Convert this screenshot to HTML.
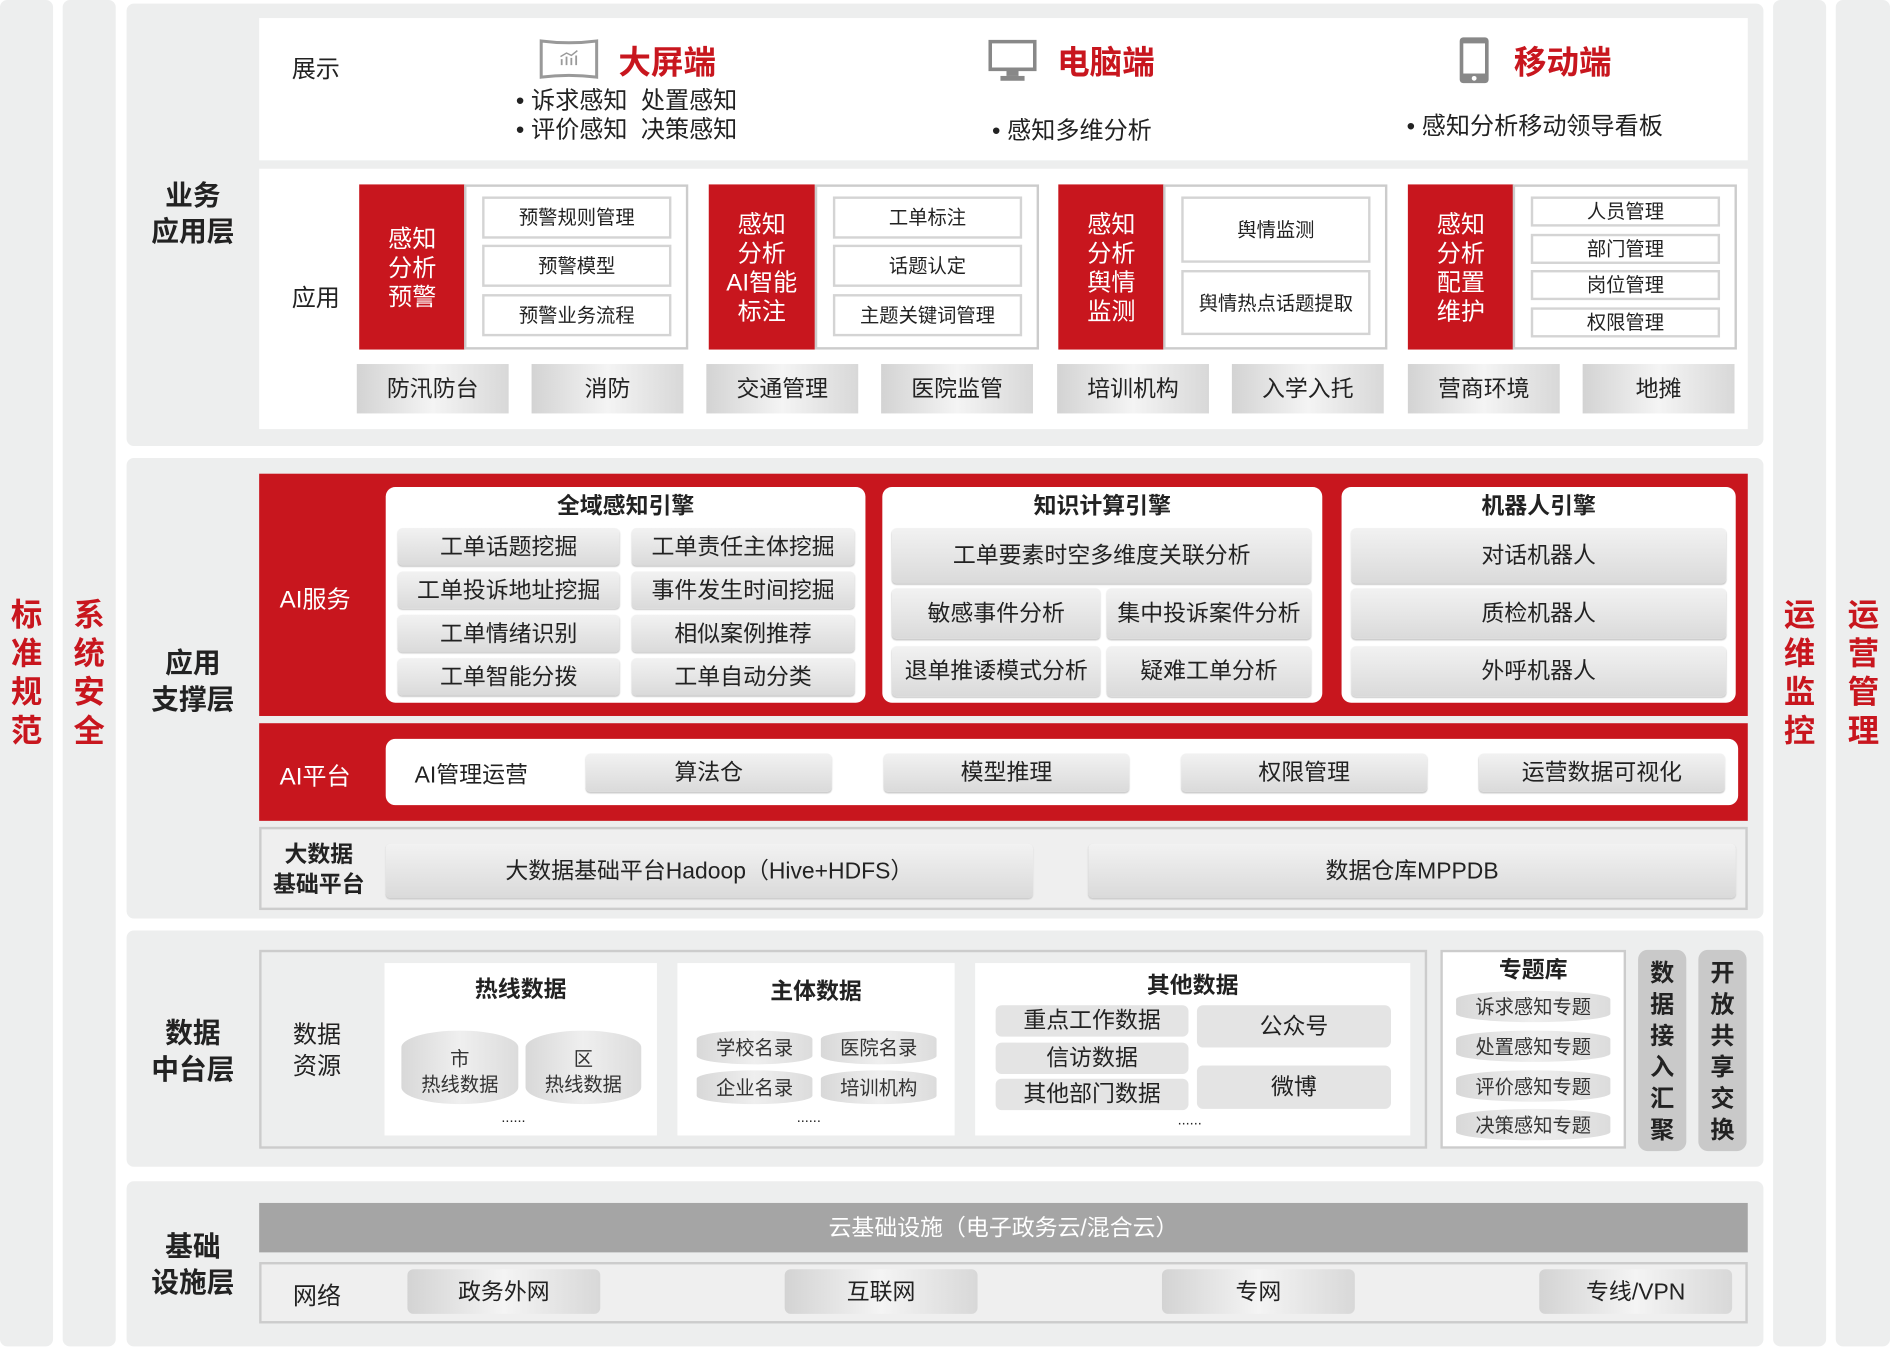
<!DOCTYPE html>
<html><head><meta charset="utf-8"><style>
*{margin:0;padding:0;box-sizing:border-box}
body{width:1890px;height:1349px;overflow:hidden;background:#fff;font-family:"Liberation Sans","Noto Sans CJK SC",sans-serif;color:#222}
#w{position:absolute;left:0;top:0;width:1568px;height:1119px;transform:scale(1.20536);transform-origin:0 0}
.a{position:absolute}
.c{position:absolute;display:flex;align-items:center;justify-content:center;text-align:center;line-height:1.2;padding-top:3px}
.bg{background:#edeeee;border-radius:6px}
.wh{background:#fff}
.red{background:#c8161e;color:#fff}
.lab{font-size:23px;font-weight:bold;color:#222;line-height:30px}
.side{color:#c8161e;font-size:26px;font-weight:bold;line-height:32px;width:30px;text-align:center}
.it{border:2px solid #d4d4d4;background:#fff;font-size:16px}
.gb{background:linear-gradient(to right,#d3d3d3,#f4f4f4 50%,#d8d8d8);font-size:19px}
.vb{background:linear-gradient(#f2f2f2,#dadada);border-radius:4px;font-size:19px;box-shadow:0 1px 1px #ccc}
.pan{background:#fff;border-radius:8px}
.hd{font-size:19px;font-weight:bold}
.cy{background:linear-gradient(to right,#d8d8d8,#efefef 50%,#dcdcdc);border-radius:50%/14px;font-size:16px;color:#333}
.cys{background:linear-gradient(to right,#d8d8d8,#efefef 50%,#dcdcdc);border-radius:50%/7px;font-size:16px;color:#333}
.gr{background:#e4e4e4;border-radius:5px;font-size:19px}
</style></head><body><div id="w">
<div class="a bg" style="left:0;top:0;width:44px;height:1117px"></div>
<div class="a bg" style="left:52px;top:0;width:44px;height:1117px"></div>
<div class="a bg" style="left:1471px;top:0;width:44px;height:1117px"></div>
<div class="a bg" style="left:1523px;top:0;width:45px;height:1117px"></div>
<div class="a side" style="left:7px;top:494px">标<br>准<br>规<br>范</div>
<div class="a side" style="left:59px;top:494px">系<br>统<br>安<br>全</div>
<div class="a side" style="left:1478px;top:494px">运<br>维<br>监<br>控</div>
<div class="a side" style="left:1531px;top:494px">运<br>营<br>管<br>理</div>

<div class="a bg" style="left:105px;top:3px;width:1358px;height:367px"></div>
<div class="c lab" style="left:105px;top:140px;width:110px;height:70px">业务<br>应用层</div>
<div class="a wh" style="left:215px;top:15px;width:1235px;height:118px"></div>
<div class="a" style="left:242px;top:41px;font-size:20px">展示</div>
<svg class="a" style="left:447px;top:32px" width="50" height="34" viewBox="0 0 50 34"><path d="M2 2 Q25 5 48 2 L48 32 Q25 29 2 32Z" fill="#fff" stroke="#999" stroke-width="2.5"/><g stroke="#999" stroke-width="1.5"><path d="M19 22v-5M23 22v-7M27 22v-6M31 22v-8"/></g><path d="M18 15l5-3 4 2 5-4" stroke="#999" fill="none" stroke-width="1.2"/></svg>
<div class="a" style="left:513px;top:30px;font-size:27px;font-weight:bold;color:#c8161e">大屏端</div>
<div class="a" style="left:428px;top:72px;font-size:20px;line-height:24px">• 诉求感知&nbsp;&nbsp;处置感知<br>• 评价感知&nbsp;&nbsp;决策感知</div>
<svg class="a" style="left:820px;top:33px" width="40" height="36" viewBox="0 0 40 36"><rect x="1.5" y="1.5" width="37" height="23" fill="#fff" stroke="#888" stroke-width="3"/><rect x="15" y="25" width="10" height="5" fill="#888"/><rect x="10" y="30" width="20" height="4" fill="#888"/></svg>
<div class="a" style="left:877px;top:30px;font-size:27px;font-weight:bold;color:#c8161e">电脑端</div>
<div class="a" style="left:823px;top:92px;font-size:20px">• 感知多维分析</div>
<svg class="a" style="left:1210px;top:30px" width="26" height="40" viewBox="0 0 26 40"><rect x="1" y="1" width="24" height="38" rx="3" fill="#888"/><rect x="4" y="6" width="18" height="25" fill="#fff"/><circle cx="13" cy="35" r="2" fill="#fff"/></svg>
<div class="a" style="left:1256px;top:30px;font-size:27px;font-weight:bold;color:#c8161e">移动端</div>
<div class="a" style="left:1167px;top:88px;font-size:20px">• 感知分析移动领导看板</div>

<div class="a wh" style="left:215px;top:140px;width:1235px;height:216px"></div>
<div class="a" style="left:242px;top:231px;font-size:20px">应用</div>
<div class="c red" style="left:298px;top:153px;width:88px;height:137px;font-size:20px">感知<br>分析<br>预警</div>
<div class="a" style="left:385px;top:153px;width:186px;height:137px;border:2px solid #ccc"></div>
<div class="c it" style="left:400px;top:163px;width:157px;height:35px">预警规则管理</div>
<div class="c it" style="left:400px;top:203px;width:157px;height:35px">预警模型</div>
<div class="c it" style="left:400px;top:244px;width:157px;height:35px">预警业务流程</div>
<div class="c red" style="left:588px;top:153px;width:88px;height:137px;font-size:20px">感知<br>分析<br>AI智能<br>标注</div>
<div class="a" style="left:676px;top:153px;width:186px;height:137px;border:2px solid #ccc"></div>
<div class="c it" style="left:691px;top:163px;width:157px;height:35px">工单标注</div>
<div class="c it" style="left:691px;top:203px;width:157px;height:35px">话题认定</div>
<div class="c it" style="left:691px;top:244px;width:157px;height:35px">主题关键词管理</div>
<div class="c red" style="left:878px;top:153px;width:88px;height:137px;font-size:20px">感知<br>分析<br>舆情<br>监测</div>
<div class="a" style="left:965px;top:153px;width:186px;height:137px;border:2px solid #ccc"></div>
<div class="c it" style="left:980px;top:163px;width:157px;height:55px">舆情监测</div>
<div class="c it" style="left:980px;top:224px;width:157px;height:54px">舆情热点话题提取</div>
<div class="c red" style="left:1168px;top:153px;width:88px;height:137px;font-size:20px">感知<br>分析<br>配置<br>维护</div>
<div class="a" style="left:1255px;top:153px;width:186px;height:137px;border:2px solid #ccc"></div>
<div class="c it" style="left:1270px;top:163px;width:157px;height:25px">人员管理</div>
<div class="c it" style="left:1270px;top:194px;width:157px;height:25px">部门管理</div>
<div class="c it" style="left:1270px;top:224px;width:157px;height:25px">岗位管理</div>
<div class="c it" style="left:1270px;top:255px;width:157px;height:25px">权限管理</div>
<div class="c gb" style="left:296px;top:302px;width:126px;height:41px">防汛防台</div>
<div class="c gb" style="left:441px;top:302px;width:126px;height:41px">消防</div>
<div class="c gb" style="left:586px;top:302px;width:126px;height:41px">交通管理</div>
<div class="c gb" style="left:731px;top:302px;width:126px;height:41px">医院监管</div>
<div class="c gb" style="left:877px;top:302px;width:126px;height:41px">培训机构</div>
<div class="c gb" style="left:1022px;top:302px;width:126px;height:41px">入学入托</div>
<div class="c gb" style="left:1168px;top:302px;width:126px;height:41px">营商环境</div>
<div class="c gb" style="left:1313px;top:302px;width:126px;height:41px">地摊</div>

<div class="a bg" style="left:105px;top:380px;width:1358px;height:382px"></div>
<div class="c lab" style="left:105px;top:530px;width:110px;height:66px">应用<br>支撑层</div>
<div class="a red" style="left:215px;top:393px;width:1235px;height:201px"></div>
<div class="a" style="left:232px;top:481px;font-size:20px;color:#fff">AI服务</div>
<div class="a pan" style="left:320px;top:404px;width:398px;height:179px"></div>
<div class="c hd" style="left:320px;top:407px;width:398px;height:26px">全域感知引擎</div>
<div class="c vb" style="left:330px;top:438px;width:184px;height:31px">工单话题挖掘</div>
<div class="c vb" style="left:524px;top:438px;width:185px;height:31px">工单责任主体挖掘</div>
<div class="c vb" style="left:330px;top:474px;width:184px;height:31px">工单投诉地址挖掘</div>
<div class="c vb" style="left:524px;top:474px;width:185px;height:31px">事件发生时间挖掘</div>
<div class="c vb" style="left:330px;top:510px;width:184px;height:31px">工单情绪识别</div>
<div class="c vb" style="left:524px;top:510px;width:185px;height:31px">相似案例推荐</div>
<div class="c vb" style="left:330px;top:546px;width:184px;height:31px">工单智能分拨</div>
<div class="c vb" style="left:524px;top:546px;width:185px;height:31px">工单自动分类</div>

<div class="a pan" style="left:732px;top:404px;width:365px;height:179px"></div>
<div class="c hd" style="left:732px;top:407px;width:365px;height:26px">知识计算引擎</div>
<div class="c vb" style="left:740px;top:438px;width:348px;height:46px">工单要素时空多维度关联分析</div>
<div class="c vb" style="left:740px;top:488px;width:173px;height:42px">敏感事件分析</div>
<div class="c vb" style="left:918px;top:488px;width:170px;height:42px">集中投诉案件分析</div>
<div class="c vb" style="left:740px;top:536px;width:173px;height:42px">退单推诿模式分析</div>
<div class="c vb" style="left:918px;top:536px;width:170px;height:42px">疑难工单分析</div>

<div class="a pan" style="left:1113px;top:404px;width:327px;height:179px"></div>
<div class="c hd" style="left:1113px;top:407px;width:327px;height:26px">机器人引擎</div>
<div class="c vb" style="left:1121px;top:438px;width:311px;height:46px">对话机器人</div>
<div class="c vb" style="left:1121px;top:488px;width:311px;height:42px">质检机器人</div>
<div class="c vb" style="left:1121px;top:536px;width:311px;height:42px">外呼机器人</div>

<div class="a red" style="left:215px;top:600px;width:1235px;height:81px"></div>
<div class="a" style="left:232px;top:628px;font-size:20px;color:#fff">AI平台</div>
<div class="a pan" style="left:320px;top:613px;width:1122px;height:55px"></div>
<div class="a" style="left:344px;top:628px;font-size:19px">AI管理运营</div>
<div class="c vb" style="left:486px;top:625px;width:204px;height:32px">算法仓</div>
<div class="c vb" style="left:733px;top:625px;width:204px;height:32px">模型推理</div>
<div class="c vb" style="left:980px;top:625px;width:204px;height:32px">权限管理</div>
<div class="c vb" style="left:1227px;top:625px;width:204px;height:32px">运营数据可视化</div>

<div class="a" style="left:215px;top:686px;width:1235px;height:69px;border:2px solid #ccc;background:#efefef"></div>
<div class="c" style="left:217px;top:693px;width:95px;height:55px;font-size:19px;font-weight:bold;line-height:25px">大数据<br>基础平台</div>
<div class="c vb" style="left:320px;top:700px;width:537px;height:45px">大数据基础平台Hadoop（Hive+HDFS）</div>
<div class="c vb" style="left:903px;top:700px;width:537px;height:45px">数据仓库MPPDB</div>

<div class="a bg" style="left:105px;top:772px;width:1358px;height:196px"></div>
<div class="c lab" style="left:105px;top:837px;width:110px;height:66px">数据<br>中台层</div>
<div class="a" style="left:215px;top:788px;width:969px;height:165px;border:2px solid #ccc"></div>
<div class="c" style="left:233px;top:843px;width:60px;height:55px;font-size:20px;line-height:26px">数据<br>资源</div>
<div class="a wh" style="left:319px;top:799px;width:226px;height:143px"></div>
<div class="c hd" style="left:319px;top:808px;width:226px;height:26px">热线数据</div>
<div class="c cy" style="left:333px;top:855px;width:97px;height:61px;line-height:21px;padding-top:8px">市<br>热线数据</div>
<div class="c cy" style="left:436px;top:855px;width:96px;height:61px;line-height:21px;padding-top:8px">区<br>热线数据</div>
<div class="c" style="left:319px;top:918px;width:214px;height:16px;font-size:12px">......</div>
<div class="a wh" style="left:562px;top:799px;width:230px;height:143px"></div>
<div class="c hd" style="left:562px;top:810px;width:230px;height:26px">主体数据</div>
<div class="c cys" style="left:578px;top:855px;width:96px;height:28px">学校名录</div>
<div class="c cys" style="left:681px;top:855px;width:96px;height:28px">医院名录</div>
<div class="c cys" style="left:578px;top:888px;width:96px;height:28px">企业名录</div>
<div class="c cys" style="left:681px;top:888px;width:96px;height:28px">培训机构</div>
<div class="c" style="left:562px;top:918px;width:218px;height:16px;font-size:12px">......</div>
<div class="a wh" style="left:809px;top:799px;width:361px;height:143px"></div>
<div class="c hd" style="left:809px;top:805px;width:361px;height:26px">其他数据</div>
<div class="c gr" style="left:826px;top:834px;width:160px;height:26px">重点工作数据</div>
<div class="c gr" style="left:826px;top:865px;width:160px;height:26px">信访数据</div>
<div class="c gr" style="left:826px;top:895px;width:160px;height:26px">其他部门数据</div>
<div class="c gr" style="left:993px;top:834px;width:161px;height:35px">公众号</div>
<div class="c gr" style="left:993px;top:884px;width:161px;height:36px">微博</div>
<div class="c" style="left:809px;top:920px;width:356px;height:16px;font-size:12px">......</div>
<div class="a wh" style="left:1195px;top:788px;width:154px;height:165px;border:2px solid #ccc"></div>
<div class="c hd" style="left:1195px;top:792px;width:154px;height:26px">专题库</div>
<div class="c cys" style="left:1208px;top:822px;width:128px;height:26px">诉求感知专题</div>
<div class="c cys" style="left:1208px;top:855px;width:128px;height:26px">处置感知专题</div>
<div class="c cys" style="left:1208px;top:888px;width:128px;height:26px">评价感知专题</div>
<div class="c cys" style="left:1208px;top:920px;width:128px;height:26px">决策感知专题</div>
<div class="c" style="left:1359px;top:788px;width:40px;height:167px;background:#c9c9c9;border-radius:8px;font-size:20px;font-weight:bold;line-height:26px">数<br>据<br>接<br>入<br>汇<br>聚</div>
<div class="c" style="left:1409px;top:788px;width:40px;height:167px;background:#c9c9c9;border-radius:8px;font-size:20px;font-weight:bold;line-height:26px">开<br>放<br>共<br>享<br>交<br>换</div>

<div class="a bg" style="left:105px;top:980px;width:1358px;height:137px"></div>
<div class="c lab" style="left:105px;top:1014px;width:110px;height:66px">基础<br>设施层</div>
<div class="c" style="left:215px;top:998px;width:1235px;height:41px;background:#a5a5a5;color:#fff;font-size:19px">云基础设施（电子政务云/混合云）</div>
<div class="a" style="left:215px;top:1047px;width:1235px;height:51px;border:2px solid #ccc;background:#efefef"></div>
<div class="a" style="left:243px;top:1059px;font-size:20px">网络</div>
<div class="c gb" style="left:338px;top:1053px;width:160px;height:37px;border-radius:5px">政务外网</div>
<div class="c gb" style="left:651px;top:1053px;width:160px;height:37px;border-radius:5px">互联网</div>
<div class="c gb" style="left:964px;top:1053px;width:160px;height:37px;border-radius:5px">专网</div>
<div class="c gb" style="left:1277px;top:1053px;width:160px;height:37px;border-radius:5px">专线/VPN</div>
</div></body></html>
